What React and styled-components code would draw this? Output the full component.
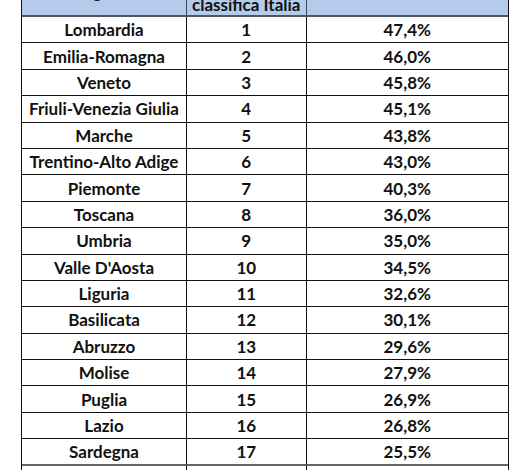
import React from "react";
import styled, { createGlobalStyle } from "styled-components";

const rows = [
  ["Lombardia", 1, "47,4%"],
  ["Emilia-Romagna", 2, "46,0%"],
  ["Veneto", 3, "45,8%"],
  ["Friuli-Venezia Giulia", 4, "45,1%"],
  ["Marche", 5, "43,8%"],
  ["Trentino-Alto Adige", 6, "43,0%"],
  ["Piemonte", 7, "40,3%"],
  ["Toscana", 8, "36,0%"],
  ["Umbria", 9, "35,0%"],
  ["Valle D'Aosta", 10, "34,5%"],
  ["Liguria", 11, "32,6%"],
  ["Basilicata", 12, "30,1%"],
  ["Abruzzo", 13, "29,6%"],
  ["Molise", 14, "27,9%"],
  ["Puglia", 15, "26,9%"],
  ["Lazio", 16, "26,8%"],
  ["Sardegna", 17, "25,5%"],
  ["Calabria", 18, "24,7%"],
];

const GlobalStyle = createGlobalStyle`
  html, body {
    margin: 0;
    padding: 0;
    height: 470px;
    overflow: hidden;
    background: #fff;
  }
`;

const Page = styled.div`
  padding-left: 21px;
  margin-top: -31px;
  font-family: Lato, "Liberation Sans", sans-serif;
  font-weight: 700;
  font-size: 17px;
  color: #111;
`;

const Table = styled.div`
  display: grid;
  width: 486px;
  grid-template-columns: 165px 119.5px 201.5px;
  grid-template-rows: 48px;
  grid-auto-rows: 26.4px;
  border-left: 1.5px solid #111;
  border-right: 1.5px solid #111;
`;

const HeadCell = styled.div`
  background: #b4cbec;
  border-right: ${(p) => (p.$last ? "none" : "1px solid #3a4a5e")};
  border-bottom: 2px solid #4d5560;
  display: flex;
  flex-direction: column;
  align-items: center;
  justify-content: ${(p) => (p.$bottom ? "flex-end" : "center")};
  line-height: 20px;
  text-align: center;
`;

const Cell = styled.div`
  display: flex;
  align-items: center;
  justify-content: center;
  border-right: ${(p) => (p.$last ? "none" : "1.5px solid #111")};
  border-bottom: ${(p) => (p.$gray ? "2px solid #666" : "1px solid #111")};
  white-space: nowrap;
`;

export default function App() {
  return (
    <>
      <GlobalStyle />
      <Page>
        <Table>
          <HeadCell>Regione</HeadCell>
          <HeadCell $bottom>
            <span>Posizione</span>
            <span>classifica Italia</span>
          </HeadCell>
          <HeadCell $last>Percentuale</HeadCell>
          {rows.map(([name, pos, pct], i) => {
            const gray = i === 16;
            return (
              <React.Fragment key={name}>
                <Cell $gray={gray}>{name}</Cell>
                <Cell $gray={gray}>{pos}</Cell>
                <Cell $gray={gray} $last>
                  {pct}
                </Cell>
              </React.Fragment>
            );
          })}
        </Table>
      </Page>
    </>
  );
}
